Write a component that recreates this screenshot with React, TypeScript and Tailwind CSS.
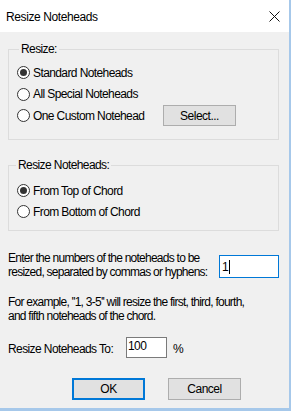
import React from "react";

function Radio({ label, checked }: { label: string; checked?: boolean }) {
  return (
    <div className="flex items-center h-[21.5px]">
      <span className="w-[13px] h-[13px] rounded-full border border-[#333] bg-white flex items-center justify-center shrink-0">
        {checked && <span className="w-[7px] h-[7px] rounded-full bg-[#333]" />}
      </span>
      <span className="ml-[3px] whitespace-nowrap">{label}</span>
    </div>
  );
}

function Radio2({ label, checked }: { label: string; checked?: boolean }) {
  return (
    <div className="flex items-center h-[21px]">
      <span className="w-[13px] h-[13px] rounded-full border border-[#333] bg-white flex items-center justify-center shrink-0">
        {checked && <span className="w-[7px] h-[7px] rounded-full bg-[#333]" />}
      </span>
      <span className="ml-[3px] whitespace-nowrap">{label}</span>
    </div>
  );
}

export default function App() {
  return (
    <div className="w-[291px] h-[411px] flex flex-col bg-[#f0f0f0] border-r-2 border-b-[3px] border-[#a6c8ea] text-[12px] leading-[14px] tracking-[-0.6px] text-black font-['Liberation_Sans',Arial,sans-serif] overflow-hidden">
      {/* title bar */}
      <div className="h-[32px] shrink-0 bg-white flex items-center justify-between pl-[6px] pr-[9px]">
        <span className="pt-[1px] tracking-[-0.4px]">Resize Noteheads</span>
        <svg width="11" height="11" viewBox="0 0 11 11" className="mt-[1px]">
          <path d="M0.5 0.5 L10.5 10.5 M10.5 0.5 L0.5 10.5" stroke="#111" strokeWidth="1" fill="none" />
        </svg>
      </div>

      <div className="flex-1 flex flex-col pl-[8px] pr-[10px]">
        <fieldset className="mt-[10px] border border-[#dcdcdc] pl-[8px] pr-0 pt-[6px] pb-[12px] m-0">
          <legend className="ml-[2px] px-[2px] leading-[14px]">Resize:</legend>
          <Radio label="Standard Noteheads" checked />
          <Radio label="All Special Noteheads" />
          <div className="flex items-center h-[21.5px]">
            <div className="w-[146px]">
              <Radio label="One Custom Notehead" />
            </div>
            <button className="w-[73px] h-[21px] bg-[#e1e1e1] border border-[#adadad] text-[12px] tracking-[-0.5px]">
              Select...
            </button>
          </div>
        </fieldset>

        <fieldset className="mt-[18.5px] border border-[#dcdcdc] pl-[8px] pr-0 pt-[8px] pb-[8px]">
          <legend className="ml-[-1px] px-[2px] leading-[14px]">Resize Noteheads:</legend>
          <Radio2 label="From Top of Chord" checked />
          <Radio2 label="From Bottom of Chord" />
        </fieldset>

        <div className="mt-[20px] flex items-start">
          <div className="whitespace-nowrap tracking-[-0.75px]">
            Enter the numbers of the noteheads to be
            <br />
            resized, separated by commas or hyphens:
          </div>
          <div className="ml-auto mt-[4px] w-[60px] h-[23px] bg-white border border-[#0078d7] flex items-center pl-[2px]">
            <span>1</span>
            <span className="w-[1px] h-[14px] bg-black ml-[1px]" />
          </div>
        </div>

        <div className="mt-[16px] whitespace-nowrap tracking-[-0.75px]">
          For example, ''1, 3-5'' will resize the first, third, fourth,
          <br />
          and fifth noteheads of the chord.
        </div>

        <div className="mt-[14px] flex items-center h-[21px]">
          <span className="w-[118px] whitespace-nowrap pt-[2px]">Resize Noteheads To:</span>
          <div className="w-[41px] h-[21px] bg-white border border-[#7a7a7a] pl-[1px] pt-[1px]">100</div>
          <span className="ml-[6px] pt-[2px]">%</span>
        </div>

        <div className="mt-[20px] flex items-center gap-[23px] pl-[64px]">
          <button className="w-[73px] h-[22px] bg-[#e1e1e1] border-2 border-[#0078d7] text-[12px] tracking-[-0.5px]">
            OK
          </button>
          <button className="w-[73px] h-[22px] bg-[#e1e1e1] border border-[#adadad] text-[12px] tracking-[-0.5px]">
            Cancel
          </button>
        </div>
      </div>
    </div>
  );
}
